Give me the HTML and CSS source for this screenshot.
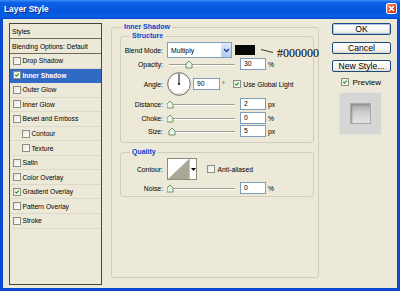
FILE: index.html
```html
<!DOCTYPE html>
<html lang="en">
<head>
  <meta charset="UTF-8">
  <title>Layer Style</title>
  <link rel="stylesheet" href="styles.css">
</head>
<body>
<div class="window">
  <div class="titlebar">
    <span class="title">Layer Style</span>
    <span class="close">
      <svg width="7" height="7" viewBox="0 0 7 7"><path d="M1 1 L6 6 M6 1 L1 6" stroke="#fff" stroke-width="1.5"/></svg>
    </span>
  </div>

  <div class="client">
    <!-- left: style list -->
    <div class="style-list">
      <div class="item head">Styles</div>
      <div class="item head">Blending Options: Default</div>
      <div class="item"><span class="cb"></span>Drop Shadow</div>
      <div class="item selected"><span class="cb on"><svg viewBox="0 0 8 8"><path d="M1.6 3.8 L3.3 5.6 L6.5 2.1" /></svg></span>Inner Shadow</div>
      <div class="item"><span class="cb"></span>Outer Glow</div>
      <div class="item"><span class="cb"></span>Inner Glow</div>
      <div class="item"><span class="cb"></span>Bevel and Emboss</div>
      <div class="item sub"><span class="cb"></span>Contour</div>
      <div class="item sub"><span class="cb"></span>Texture</div>
      <div class="item"><span class="cb"></span>Satin</div>
      <div class="item"><span class="cb"></span>Color Overlay</div>
      <div class="item"><span class="cb on"><svg viewBox="0 0 8 8"><path d="M1.6 3.8 L3.3 5.6 L6.5 2.1" /></svg></span>Gradient Overlay</div>
      <div class="item"><span class="cb"></span>Pattern Overlay</div>
      <div class="item"><span class="cb"></span>Stroke</div>
    </div>

    <!-- middle: settings -->
    <fieldset class="group outer">
      <legend>Inner Shadow</legend>

      <fieldset class="group inner structure">
        <legend>Structure</legend>

        <div class="row blend">
          <span class="lbl">Blend Mode:</span>
          <div class="select">
            <span>Multiply</span>
            <span class="select-btn"><svg width="7" height="5" viewBox="0 0 7 5"><path d="M1 1 L3.5 3.5 L6 1" fill="none" stroke="#1f3f8f" stroke-width="1.4"/></svg></span>
          </div>
          <span class="swatch"></span>
          <svg class="pointer" width="12" height="4" viewBox="0 0 12 4"><path d="M0 0.5 L12 3.5" stroke="#222" stroke-width="0.9"/></svg>
          <span class="hex">#000000</span>
        </div>

        <div class="row line">
          <span class="lbl">Opacity:</span>
          <svg class="slider" width="68" height="12" viewBox="0 0 68 12">
            <path d="M2 6.5 H68" stroke="#a19e90"/><path d="M2 7.5 H68" stroke="#fff"/>
            <polygon points="19,6 22,3 25,6 25,10 19,10" fill="#eef6e8" stroke="#5f8a5f" stroke-width="0.9"/>
          </svg>
          <span class="field">30</span><span class="unit">%</span>
        </div>

        <div class="row angle">
          <span class="lbl">Angle:</span>
          <svg class="dial" width="24" height="24" viewBox="0 0 24 24">
            <circle cx="12" cy="12" r="11.3" fill="#fff" stroke="#6a6a64" stroke-width="1"/>
            <path d="M3.5 17 A10 10 0 0 0 20.5 17" fill="none" stroke="#d8d6cc" stroke-width="1"/>
            <path d="M12 12 V1.5" stroke="#111" stroke-width="1"/>
            <circle cx="12" cy="12" r="1.1" fill="#111"/>
          </svg>
          <span class="field angle-field">90</span><span class="unit deg">°</span>
          <span class="cb on gl"><svg viewBox="0 0 8 8"><path d="M1.6 3.8 L3.3 5.6 L6.5 2.1" /></svg></span>
          <span class="cb-label">Use Global Light</span>
        </div>

        <div class="row line distance">
          <span class="lbl">Distance:</span>
          <svg class="slider" width="68" height="12" viewBox="0 0 68 12">
            <path d="M2 6.5 H68" stroke="#a19e90"/><path d="M2 7.5 H68" stroke="#fff"/>
            <polygon points="0,6 3,3 6,6 6,10 0,10" fill="#eef6e8" stroke="#5f8a5f" stroke-width="0.9"/>
          </svg>
          <span class="field">2</span><span class="unit">px</span>
        </div>

        <div class="row line choke">
          <span class="lbl">Choke:</span>
          <svg class="slider" width="68" height="12" viewBox="0 0 68 12">
            <path d="M2 6.5 H68" stroke="#a19e90"/><path d="M2 7.5 H68" stroke="#fff"/>
            <polygon points="0,6 3,3 6,6 6,10 0,10" fill="#eef6e8" stroke="#5f8a5f" stroke-width="0.9"/>
          </svg>
          <span class="field">0</span><span class="unit">%</span>
        </div>

        <div class="row line size">
          <span class="lbl">Size:</span>
          <svg class="slider" width="68" height="12" viewBox="0 0 68 12">
            <path d="M2 6.5 H68" stroke="#a19e90"/><path d="M2 7.5 H68" stroke="#fff"/>
            <polygon points="2,6 5,3 8,6 8,10 2,10" fill="#eef6e8" stroke="#5f8a5f" stroke-width="0.9"/>
          </svg>
          <span class="field">5</span><span class="unit">px</span>
        </div>
      </fieldset>

      <fieldset class="group inner quality">
        <legend>Quality</legend>

        <div class="row contour-row">
          <span class="lbl">Contour:</span>
          <div class="contour">
            <svg width="21" height="20" viewBox="0 0 21 20">
              <rect width="21" height="20" fill="#fff"/>
              <polygon points="0,20 21,0 21,20" fill="#aba797"/>
            </svg>
            <span class="contour-btn"><svg width="5" height="3" viewBox="0 0 5 3"><polygon points="0,0 5,0 2.5,3" fill="#000"/></svg></span>
          </div>
          <span class="cb aa"></span>
          <span class="cb-label">Anti-aliased</span>
        </div>

        <div class="row line noise">
          <span class="lbl">Noise:</span>
          <svg class="slider" width="68" height="12" viewBox="0 0 68 12">
            <path d="M2 6.5 H68" stroke="#a19e90"/><path d="M2 7.5 H68" stroke="#fff"/>
            <polygon points="0,6 3,3 6,6 6,10 0,10" fill="#eef6e8" stroke="#5f8a5f" stroke-width="0.9"/>
          </svg>
          <span class="field">0</span><span class="unit">%</span>
        </div>
      </fieldset>
    </fieldset>

    <!-- right: buttons and preview -->
    <div class="actions">
      <button class="btn default">OK</button>
      <button class="btn cancel">Cancel</button>
      <button class="btn new-style">New Style...</button>
      <div class="preview-row">
        <span class="cb on"><svg viewBox="0 0 8 8"><path d="M1.6 3.8 L3.3 5.6 L6.5 2.1" /></svg></span>
        <span class="preview-label">Preview</span>
      </div>
      <div class="preview-box">
        <div class="preview-swatch"></div>
      </div>
    </div>
  </div>
</div>
</body>
</html>
```

FILE: styles.css
```css
/* page */
html, body {
  margin: 0;
  padding: 0;
  background: #ece9d8;
}
body {
  width: 400px;
  height: 291px;
  overflow: hidden;
  font-family: "Liberation Sans", Arial, sans-serif;
  color: #000;
}

/* XP window frame */
.window {
  width: 400px;
  height: 291px;
  display: flex;
  flex-direction: column;
  background: #0b48cf;
}
.titlebar {
  height: 19px;
  flex-shrink: 0;
  display: flex;
  justify-content: space-between;
  align-items: flex-start;
  padding: 0 3px 0 4px;
  background: linear-gradient(to bottom, #3d8cf6 0%, #0b60e8 14%, #0556dd 55%, #0a5ee6 88%, #0447c9 100%);
}
.title {
  margin-top: 4px;
  color: #fff;
  font-size: 8.4px;
  font-weight: bold;
  text-shadow: 1px 1px 0 #0a2f8a;
}
.close {
  width: 11px;
  height: 11px;
  box-sizing: border-box;
  margin-top: 3px;
  border: 1px solid #fff;
  border-radius: 2px;
  background: linear-gradient(135deg, #f08a62, #d9471f 60%, #c2381a);
  display: flex;
  justify-content: center;
  align-items: center;
}

.client {
  flex: 1;
  margin: 0 3px 3px;
  padding: 4px 0 0 6px;
  background: #ece9d8;
  display: flex;
  align-items: flex-start;
}

/* style list */
.style-list {
  width: 93px;
  height: 262px;
  box-sizing: border-box;
  border: 1px solid #45443d;
  font-size: 6.7px;
}
.item {
  height: 13.55px;
  border-bottom: 1px solid #dcd9ca;
  display: flex;
  align-items: center;
  padding-left: 3px;
  white-space: nowrap;
}
.item.head {
  height: 14px;
  padding-left: 2px;
  border-bottom: 1px solid #6c6a5f;
}
.item.sub {
  padding-left: 12px;
}
.item.selected {
  background: #316ac5;
  color: #fff;
  font-weight: bold;
  border-bottom-color: #316ac5;
}

/* checkboxes */
.cb {
  width: 8px;
  height: 8px;
  box-sizing: border-box;
  flex-shrink: 0;
  border: 1px solid #8e8d84;
  background: linear-gradient(135deg, #e6e5de, #fff);
  margin-right: 1.5px;
  display: flex;
}
.cb svg {
  width: 6px;
  height: 6px;
}
.cb svg path {
  fill: none;
  stroke: #21a121;
  stroke-width: 1.6;
}

/* group boxes */
.group {
  margin: 0;
  padding: 0;
  min-width: 0;
  border: 1px solid #d0cdbc;
  border-radius: 3px;
}
.group legend {
  padding: 0 2px;
  font-size: 7px;
  line-height: 8px;
  font-weight: bold;
  color: #0046d5;
}
.outer {
  margin-left: 9px;
  width: 208px;
  height: 255px;
  box-sizing: border-box;
}
.outer > legend {
  margin-left: 10px;
}
.inner {
  margin: 1px 4px 0 8px;
}
.inner > legend {
  margin-left: 9px;
}
.structure {
  padding-bottom: 5px;
}
.quality {
  margin-top: 5px;
  padding-bottom: 2px;
}

/* setting rows */
.row {
  display: flex;
  align-items: center;
  font-size: 6.8px;
  white-space: nowrap;
}
.lbl {
  width: 42px;
  margin-right: 4px;
  text-align: right;
  flex-shrink: 0;
}
.blend {
  margin-top: 2px;
  height: 16px;
}
.line {
  height: 12px;
}
.angle {
  margin-top: 1px;
  height: 26px;
}
.distance { margin-top: 1px; }
.choke { margin-top: 2px; }
.size { margin-top: 1px; }

.select {
  width: 65px;
  height: 16px;
  box-sizing: border-box;
  flex-shrink: 0;
  border: 1px solid #7f9db9;
  background: #fff;
  padding-left: 3px;
  display: flex;
  align-items: center;
}
.select-btn {
  margin-left: auto;
  width: 10px;
  height: 14px;
  border-radius: 1px;
  background: linear-gradient(to bottom, #e0e9fd, #b5c9f5);
  display: flex;
  justify-content: center;
  align-items: center;
}
.swatch {
  width: 20px;
  height: 10px;
  margin-left: 3px;
  flex-shrink: 0;
  background: #080808;
}
.pointer {
  margin-left: 6px;
  margin-top: 2px;
  flex-shrink: 0;
}
.hex {
  margin-left: 4px;
  margin-top: 6px;
  font-family: "Liberation Serif", "Times New Roman", serif;
  font-size: 12px;
  line-height: 12px;
}

.slider {
  margin-right: 5px;
  flex-shrink: 0;
}
.field {
  width: 26px;
  height: 12px;
  box-sizing: border-box;
  flex-shrink: 0;
  border: 1px solid #7f9db9;
  background: #fff;
  padding-left: 3px;
  line-height: 10px;
}
.unit {
  margin-left: 2px;
}
.dial {
  flex-shrink: 0;
}
.angle-field {
  margin-left: 2px;
  width: 27px;
}
.unit.deg {
  margin-right: 8px;
}
.cb-label {
  margin-left: 1px;
}

/* contour picker */
.contour-row {
  margin-top: 2px;
  height: 22px;
}
.contour {
  height: 22px;
  box-sizing: border-box;
  border: 1px solid #8d8b80;
  background: #fff;
  display: flex;
}
.contour-btn {
  width: 6px;
  border-left: 1px solid #c9c6b8;
  display: flex;
  justify-content: center;
  align-items: center;
}
.cb.aa {
  margin-left: 10px;
}
.noise {
  margin-top: 2px;
}

/* buttons and preview */
.actions {
  margin-left: 13px;
  width: 59px;
  display: flex;
  flex-direction: column;
}
.btn {
  height: 12px;
  box-sizing: border-box;
  margin: 0;
  padding: 0;
  border: 1px solid #1d4a7a;
  border-radius: 2px;
  background: linear-gradient(to bottom, #fff, #f4f3ee 70%, #dcd8cc);
  font-family: "Liberation Sans", Arial, sans-serif;
  font-size: 8.6px;
  line-height: 10px;
  color: #000;
}
.btn.default {
  box-shadow: inset 0 0 0 1px #a9c4ee;
}
.btn.cancel { margin-top: 7px; }
.btn.new-style { margin-top: 6px; }

.preview-row {
  margin-top: 6px;
  height: 8px;
  padding-left: 9px;
  display: flex;
  align-items: center;
}
.preview-label {
  margin-left: 2px;
  font-size: 8px;
}
.preview-box {
  margin: 6px 0 0 7px;
  width: 43px;
  height: 43px;
  box-sizing: border-box;
  border: 1px solid #e3e3e0;
  background: #d6d6d4;
  display: flex;
  justify-content: center;
  align-items: center;
}
.preview-swatch {
  width: 21px;
  height: 21px;
  box-sizing: border-box;
  border: 1px solid #a9a9a9;
  background: linear-gradient(to bottom, #a4a4a4, #cfcfcf 45%, #e4e4e4);
  box-shadow: inset 1px 1px 2px #8c8c8c;
}
```
